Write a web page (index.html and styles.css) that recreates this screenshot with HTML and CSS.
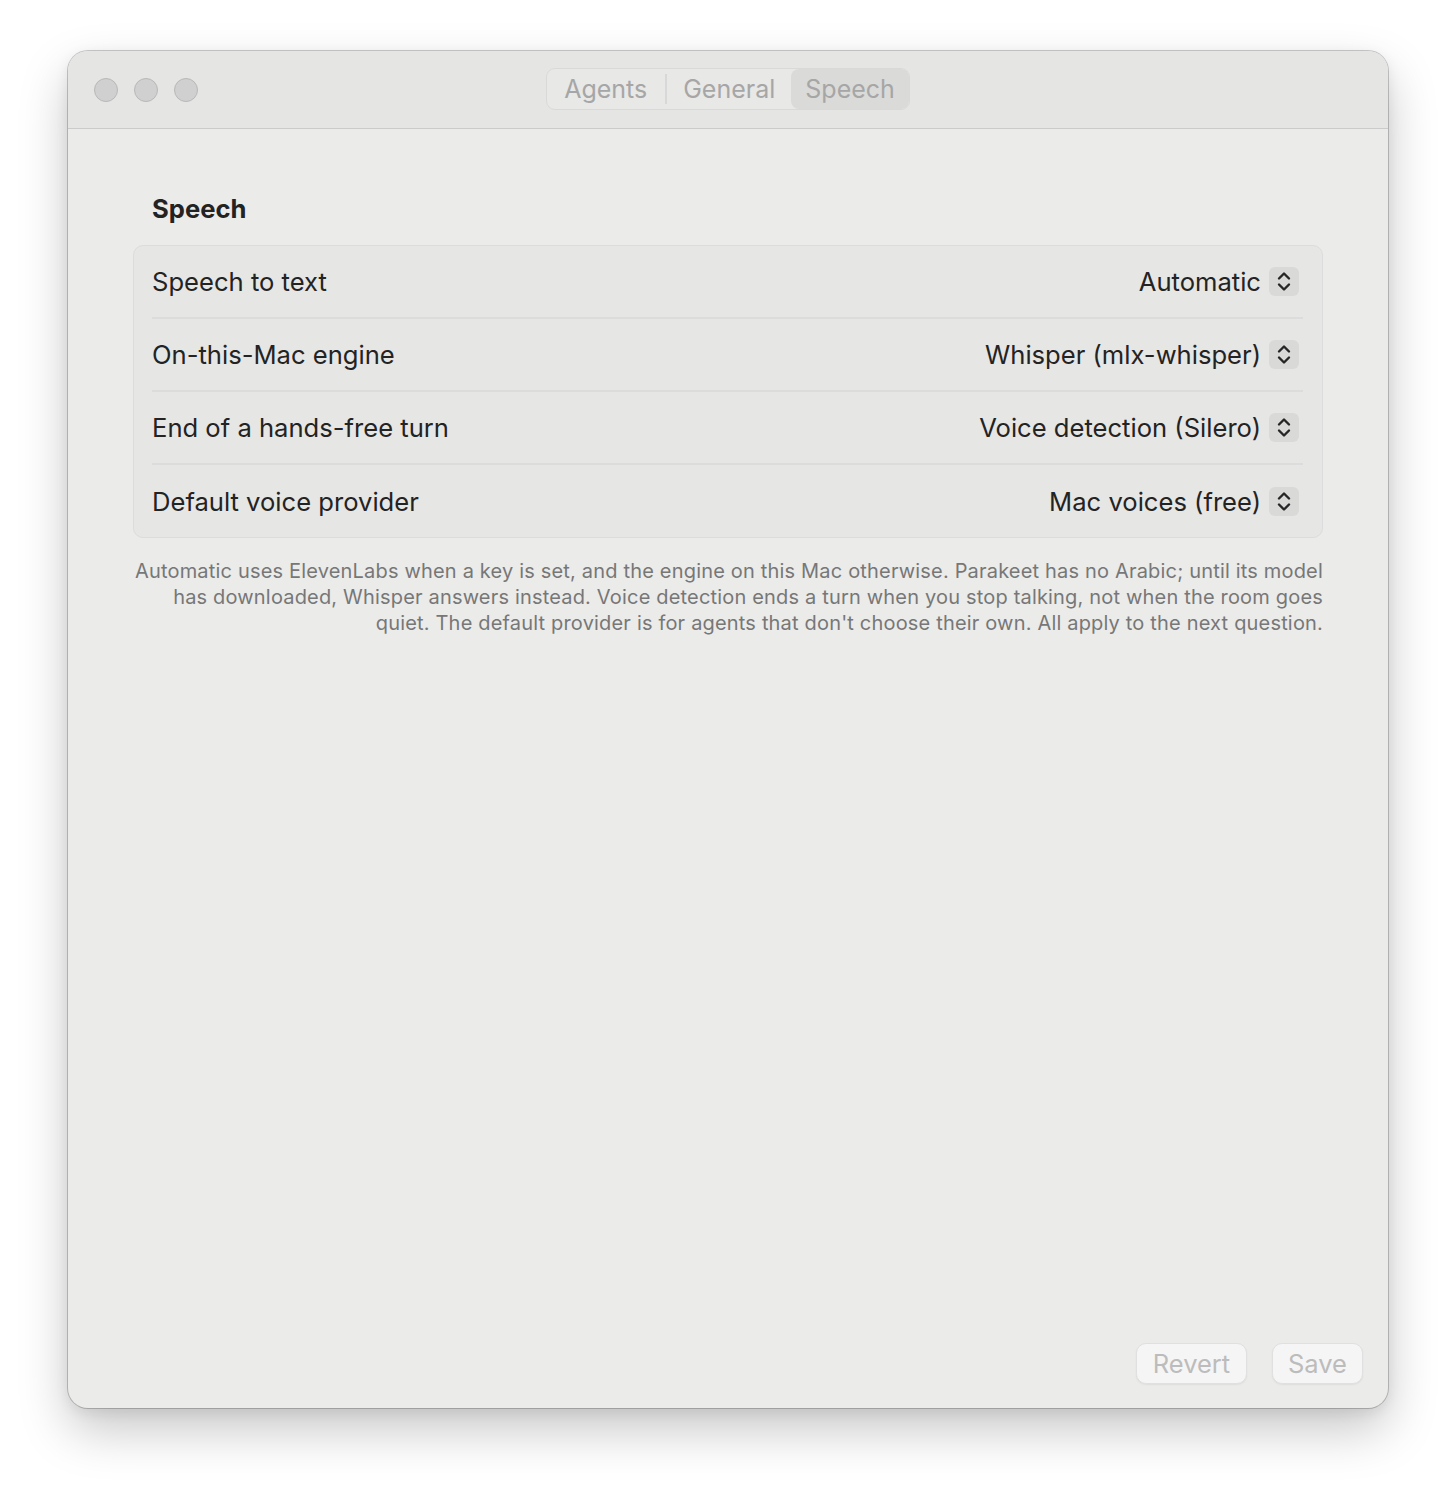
FILE: index.html
```html
<!DOCTYPE html>
<html lang="en">
<head>
<meta charset="utf-8">
<title>Speech settings</title>
<link rel="stylesheet" href="styles.css">
</head>
<body>
<div class="window">
  <header class="titlebar">
    <div class="lights">
      <span class="light"></span>
      <span class="light"></span>
      <span class="light"></span>
    </div>
    <nav class="segmented">
      <span class="seg">Agents</span>
      <span class="sep"></span>
      <span class="seg">General</span>
      <span class="seg selected">Speech</span>
    </nav>
    <div class="spacer"></div>
  </header>
  <main class="content">
    <h2 class="section-title">Speech</h2>
    <div class="group">
      <div class="row">
        <span class="label">Speech to text</span>
        <span class="popup"><span class="value">Automatic</span><span class="stepper"><svg viewBox="0 0 30 29" width="30" height="29"><path d="M10 11.5 L15 6.5 L20 11.5 M10 17.5 L15 22.5 L20 17.5"/></svg></span></span>
      </div>
      <div class="row">
        <span class="label">On-this-Mac engine</span>
        <span class="popup"><span class="value">Whisper (mlx-whisper)</span><span class="stepper"><svg viewBox="0 0 30 29" width="30" height="29"><path d="M10 11.5 L15 6.5 L20 11.5 M10 17.5 L15 22.5 L20 17.5"/></svg></span></span>
      </div>
      <div class="row">
        <span class="label">End of a hands-free turn</span>
        <span class="popup"><span class="value">Voice detection (Silero)</span><span class="stepper"><svg viewBox="0 0 30 29" width="30" height="29"><path d="M10 11.5 L15 6.5 L20 11.5 M10 17.5 L15 22.5 L20 17.5"/></svg></span></span>
      </div>
      <div class="row">
        <span class="label">Default voice provider</span>
        <span class="popup"><span class="value">Mac voices (free)</span><span class="stepper"><svg viewBox="0 0 30 29" width="30" height="29"><path d="M10 11.5 L15 6.5 L20 11.5 M10 17.5 L15 22.5 L20 17.5"/></svg></span></span>
      </div>
    </div>
    <p class="note">Automatic uses ElevenLabs when a key is set, and the engine on this Mac otherwise. Parakeet has no Arabic; until its model<br>has downloaded, Whisper answers instead. Voice detection ends a turn when you stop talking, not when the room goes<br>quiet. The default provider is for agents that don't choose their own. All apply to the next question.</p>
  </main>
  <footer class="footer">
    <button class="btn btn-revert">Revert</button>
    <button class="btn btn-save">Save</button>
  </footer>
</div>
</body>
</html>
```

FILE: styles.css
```css
html, body {
  margin: 0;
  padding: 0;
  background: #ffffff;
}

body {
  font-family: Inter, "Liberation Sans", Arial, sans-serif;
  color: #262626;
  padding: 51px 0 0 68px;
  height: 1492px;
  box-sizing: border-box;
}

.window {
  width: 1320px;
  height: 1357px;
  border-radius: 20px;
  background: #ebebea;
  box-shadow: 0 0 0 1px rgba(0, 0, 0, 0.2), 0 22px 50px rgba(0, 0, 0, 0.22), 0 4px 14px rgba(0, 0, 0, 0.08);
  display: flex;
  flex-direction: column;
  overflow: hidden;
}

.titlebar {
  height: 77px;
  background: #e5e5e4;
  border-bottom: 1px solid #cbcbcb;
  display: grid;
  grid-template-columns: 1fr auto 1fr;
  align-items: center;
  flex-shrink: 0;
}

.lights {
  display: flex;
  gap: 16px;
  padding-left: 26px;
}

.light {
  width: 22px;
  height: 22px;
  border-radius: 50%;
  background: #d0d0d0;
  border: 1px solid #b8b8b8;
}

.segmented {
  display: flex;
  align-items: center;
  height: 40px;
  border: 1px solid #d9d9d9;
  border-radius: 9px;
  background: #e8e8e7;
  margin-top: -1px;
}

.seg {
  font-size: 25px;
  color: #a6a6a6;
  padding: 0 16px;
  height: 40px;
  line-height: 40px;
}

.seg:first-child {
  padding: 0 18px 0 17px;
}

.seg.selected {
  background: #dadad9;
  border-radius: 8px;
  padding: 0 14px 0 14px;
}

.sep {
  width: 2px;
  height: 30px;
  background: #d8d8d8;
}

.content {
  flex: 1;
  padding: 64px 65px 0 65px;
}

.section-title {
  margin: 0 0 20px 19px;
  font-size: 25.6px;
  line-height: 32px;
  font-weight: 700;
  color: #232323;
}

.group {
  border: 1px solid #dcdcdc;
  border-radius: 10px;
  background: #e6e6e5;
}

.row {
  height: 73px;
  display: flex;
  align-items: center;
  justify-content: space-between;
  margin: 0 19px 0 18px;
  border-bottom: 2px solid #dcdcdc;
  box-sizing: border-box;
}

.row:last-child {
  border-bottom: none;
  height: 72px;
}

.label,
.value {
  font-size: 25.6px;
  color: #232323;
}

.popup {
  display: flex;
  align-items: center;
  gap: 8px;
  margin-right: 4px;
}

.stepper {
  width: 30px;
  height: 29px;
  border-radius: 6px;
  background: #d9d9d8;
  display: block;
}

.stepper svg {
  display: block;
}

.stepper path {
  fill: none;
  stroke: #262626;
  stroke-width: 2.4;
  stroke-linecap: round;
  stroke-linejoin: round;
}

.note {
  margin: 20px 0 0 0;
  font-size: 20px;
  line-height: 26px;
  color: #777777;
  text-align: right;
  letter-spacing: 0.18px;
}

.footer {
  display: flex;
  justify-content: flex-end;
  gap: 25px;
  padding: 0 25px 24px 0;
}

.btn {
  font-family: Inter, "Liberation Sans", Arial, sans-serif;
  font-size: 25.5px;
  color: #bcbcbc;
  background: #f5f5f5;
  border: 1px solid #e0e0e0;
  border-radius: 10px;
  height: 41px;
  padding: 0;
  box-shadow: 0 1px 2px rgba(0, 0, 0, 0.06);
}

.btn-revert {
  width: 111px;
}

.btn-save {
  width: 91px;
}
```
